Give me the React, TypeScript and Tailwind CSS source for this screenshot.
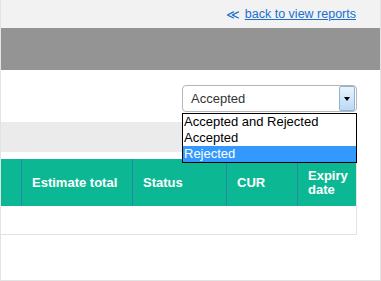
const columns = [
  { label: "", width: "w-[20px]" },
  { label: "Estimate total", width: "w-[111px]" },
  { label: "Status", width: "w-[94px]" },
  { label: "CUR", width: "w-[71px]" },
  { label: "Expiry date", width: "flex-1" },
];

const options = ["Accepted and Rejected", "Accepted", "Rejected"];

export default function App() {
  return (
    <div className="h-[281px] w-[381px] overflow-hidden border-r border-b border-l border-[#e3e3e3] bg-white font-['Liberation_Sans',Arial,sans-serif]">
      <div className="flex h-[28px] items-center justify-end bg-[#f2f2f2] pr-[24px]">
        <a href="#" className="flex items-center gap-[5px] text-[12.5px] text-[#1b6fd1]">
          <span className="text-[13px] leading-none">≪</span>
          <span className="underline">back to view reports</span>
        </a>
      </div>
      <div className="h-[42px] bg-[#949494]" />

      <div className="pr-[23px]">
        <div className="relative flex justify-end pt-[15px]">
          <div className="flex h-[27px] w-[175px] items-center rounded-[4px] border border-[#b5b5b5] bg-white">
            <span className="flex-1 pl-[8px] text-[13px] text-[#333]">Accepted</span>
            <div className="mr-[1px] flex h-[25px] w-[16px] items-center justify-center rounded-[2px] border border-[#8db2d6] bg-gradient-to-b from-[#eaf3fb] to-[#b9d9f5]">
              <span className="h-0 w-0 border-t-[4px] border-r-[3.5px] border-l-[3.5px] border-t-black border-r-transparent border-l-transparent" />
            </div>
          </div>
          <ul className="absolute top-[43px] right-0 z-10 w-[175px] border border-black bg-white text-[13px] leading-[16px] text-black">
            {options.map((option) => (
              <li
                key={option}
                className={
                  option === "Rejected"
                    ? "bg-[#3399ff] pl-[1px] text-white"
                    : "pl-[1px]"
                }
              >
                {option}
              </li>
            ))}
          </ul>
        </div>

        <div className="mt-[10px] h-[30px] bg-[#ebebeb]" />

        <div className="mt-[7px] border-r border-b border-[#e3e3e3]">
          <div className="flex h-[47px] bg-[#0cb894] text-[13px] font-bold leading-[15px] text-white">
            {columns.map((column, index) => (
              <div
                key={index}
                className={`${column.width} flex items-center ${index > 0 ? "border-l border-[#2a86a6] pl-[10px]" : ""}`}
              >
                {column.label === "Expiry date" ? (
                  <span className="leading-[14px]">
                    Expiry
                    <br />
                    date
                  </span>
                ) : (
                  column.label
                )}
              </div>
            ))}
          </div>
          <div className="h-[28px]" />
        </div>
      </div>
    </div>
  );
}
